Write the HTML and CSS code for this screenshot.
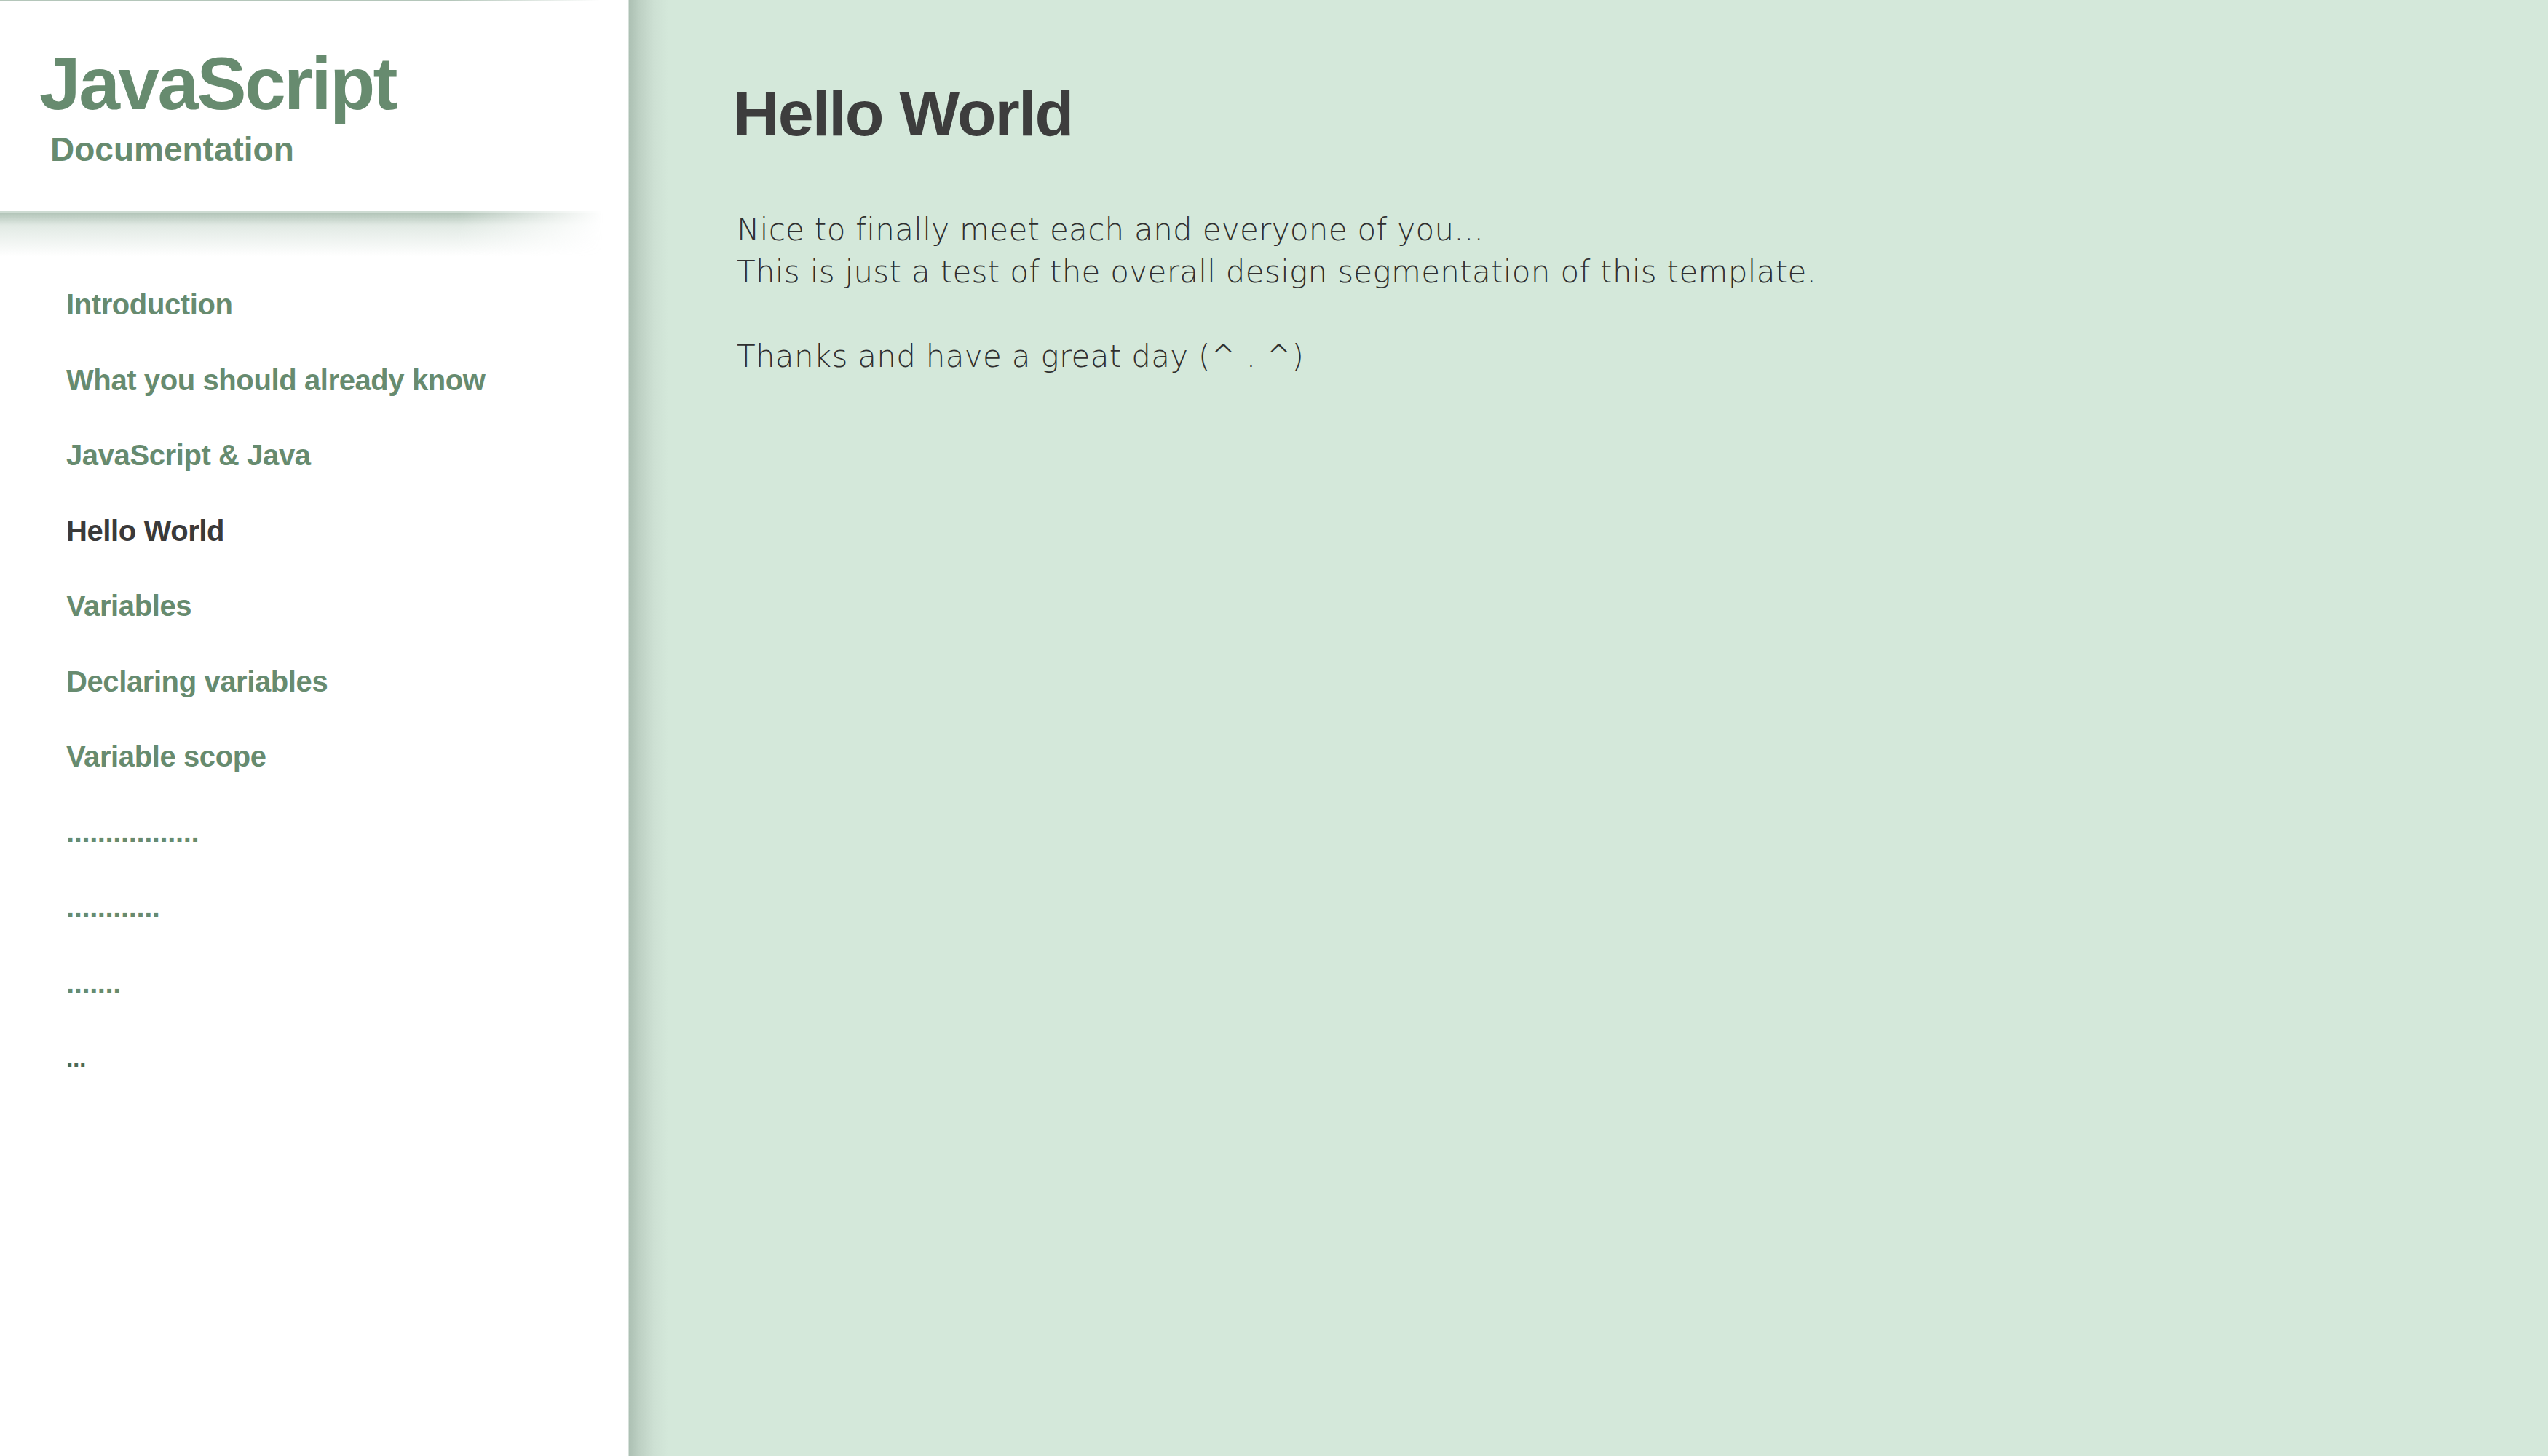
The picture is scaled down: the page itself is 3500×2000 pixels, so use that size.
FILE: index.html
```html
<!DOCTYPE html>
<html lang="en">
<head>
<meta charset="utf-8">
<title>JavaScript Documentation</title>
<link rel="stylesheet" href="styles.css">
</head>
<body>
<div class="layout">
  <aside class="sidebar">
    <header class="brand">
      <div class="brand-title">JavaScript</div>
      <div class="brand-sub">Documentation</div>
    </header>
    <nav class="nav">
      <a class="nav-link" href="#">Introduction</a>
      <a class="nav-link" href="#">What you should already know</a>
      <a class="nav-link" href="#">JavaScript &amp; Java</a>
      <a class="nav-link nav-link-active" href="#">Hello World</a>
      <a class="nav-link" href="#">Variables</a>
      <a class="nav-link" href="#">Declaring variables</a>
      <a class="nav-link" href="#">Variable scope</a>
      <a class="nav-link" href="#">.................</a>
      <a class="nav-link" href="#">............</a>
      <a class="nav-link" href="#">.......</a>
      <a class="nav-link nav-link-more" href="#">...</a>
    </nav>
  </aside>
  <main class="content">
    <h1 class="page-title">Hello World</h1>
    <p class="page-text">Nice to finally meet each and everyone of you...<br>This is just a test of the overall design segmentation of this template.<br><br>Thanks and have a great day (^ . ^)</p>
  </main>
</div>
</body>
</html>
```
FILE: styles.css
```css
html, body {
  margin: 0;
  padding: 0;
  height: 100%;
}

body {
  font-family: "Liberation Sans", Arial, sans-serif;
  background: #d4e8da;
}

.layout {
  display: flex;
  height: 100vh;
}

.sidebar {
  width: 864px;
  flex: 0 0 864px;
  background: #ffffff;
  border-right: 1px solid #d6e0da;
  box-sizing: border-box;
  display: flex;
  flex-direction: column;
  position: relative;
  z-index: 1;
}

.brand {
  height: 290px;
  box-sizing: border-box;
  padding: 64px 0 0 54px;
  background: #ffffff;
  position: relative;
}

.brand::before {
  content: "";
  position: absolute;
  left: 0;
  top: 0;
  width: 830px;
  height: 2px;
  background: linear-gradient(to right, #b4c6ba 0, #b4c6ba 620px, rgba(255, 255, 255, 0) 825px);
}

.brand::after {
  content: "";
  position: absolute;
  left: 0;
  top: 100%;
  width: 830px;
  height: 60px;
  border-top: 2px solid #cddbd2;
  background: linear-gradient(to bottom, rgba(150, 175, 158, 0.75) 0, rgba(190, 208, 196, 0.45) 18px, rgba(255, 255, 255, 0) 60px);
  -webkit-mask-image: linear-gradient(to right, #000 0, #000 630px, transparent 828px);
  mask-image: linear-gradient(to right, #000 0, #000 630px, transparent 828px);
}

.brand-title {
  font-weight: 700;
  font-size: 102px;
  line-height: 102px;
  letter-spacing: -2.6px;
  color: #678b6f;
}

.brand-sub {
  margin: 16px 0 0 15px;
  font-weight: 700;
  font-size: 46px;
  line-height: 46px;
  color: #678b6f;
}

.nav {
  display: flex;
  flex-direction: column;
  padding: 77px 0 0 91px;
}

.nav-link {
  display: block;
  font-weight: 700;
  font-size: 40px;
  line-height: 103.5px;
  letter-spacing: -0.4px;
  color: #678b6f;
  text-decoration: none;
}

.nav-link-active {
  color: #3a3a3a;
}

.nav-link-more {
  color: #4c6a56;
  font-size: 34px;
}

.content {
  flex: 1;
  padding: 112px 0 0 143px;
  background: linear-gradient(to right, #acc0b3 0, #bdd0c3 14px, #cde0d3 34px, #d4e8da 54px);
}

.page-title {
  margin: 0;
  font-family: "Liberation Sans", Arial, sans-serif;
  font-weight: 700;
  font-size: 88px;
  line-height: 88px;
  letter-spacing: -1.9px;
  color: #3d3d3d;
}

.page-text {
  margin: 87px 0 0 5px;
  font-family: "DejaVu Sans", sans-serif;
  font-weight: 200;
  font-size: 42px;
  line-height: 58px;
  letter-spacing: 0.3px;
  color: #2f2f2f;
}
```
